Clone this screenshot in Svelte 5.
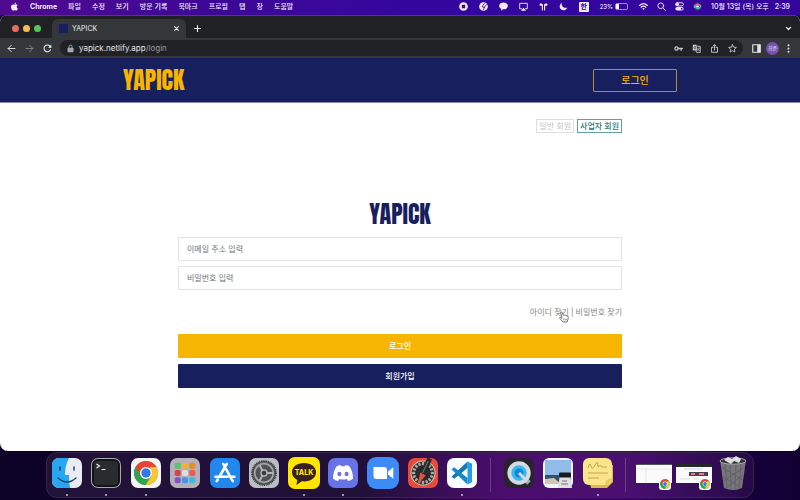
<script>
  const menus = ['파일', '수정', '보기', '방문 기록', '북마크', '프로필', '탭', '창', '도움말'];
  const status = ['record', 'clock', 'chat', 'display', 'airpods', 'moon'];
  const apps = [
    { id: 'finder', name: 'Finder', open: true },
    { id: 'terminal', name: 'Terminal', open: true },
    { id: 'chrome', name: 'Chrome', open: true },
    { id: 'launchpad', name: 'Launchpad' },
    { id: 'store', name: 'App Store' },
    { id: 'settings', name: 'Settings' },
    { id: 'talk', name: 'KakaoTalk', open: true },
    { id: 'discord', name: 'Discord', open: true },
    { id: 'zoom', name: 'Zoom' },
    { id: 'tester', name: 'Speed test' },
    { id: 'code', name: 'Code', open: true }
  ];
  const tools = [
    { id: 'quicktime', name: 'QuickTime' },
    { id: 'preview', name: 'Preview' },
    { id: 'notes', name: 'Stickies', open: true }
  ];
  const windows = [
    { id: 'window1', name: 'Window 1' },
    { id: 'window2', name: 'Window 2' },
    { id: 'trash', name: 'Trash' }
  ];
  const pads = ['#54c568', '#f3b32c', '#e88d25', '#d94343', '#dedede', '#ef5b50', '#8751c9', '#369ce8', '#43b9d8'];
  const ticks = Array.from({ length: 16 }, (_, i) => i * 22.5);
</script>

{#snippet chromeMark()}
  <circle cx="15" cy="15" r="12" fill="#31a350" />
  <path d="M4.6 9A12 12 0 0 1 25.4 9L15 9.4 9.8 18Z" fill="#e94335" />
  <path d="M25.4 9A12 12 0 0 1 14.6 27L20.2 18 19 9Z" fill="#fbc52d" />
  <path d="M4.6 9 9.8 18 15 21 14.6 27A12 12 0 0 1 4.6 9Z" fill="#31a350" />
  <circle cx="15" cy="15" r="6" fill="#fff" />
  <circle cx="15" cy="15" r="4.7" fill="#3478e5" />
{/snippet}

{#snippet glyph(id)}
  <svg class="glyph" viewBox="0 0 12 12" fill="none" stroke="currentColor" stroke-width="1.2" stroke-linecap="round" stroke-linejoin="round" aria-hidden="true">
    {#if id === 'apple'}
      <path d="M8.1.6C8 2 7.1 2.8 6 2.8 6 1.6 7 .8 8.1.6ZM10.2 4.2C8.3 5.4 8.7 7.9 10.6 8.6 10 10.2 9 11.5 8 11.4 7.1 11.3 6.8 11 6 11 5.2 11 4.8 11.4 4 11.4 2.8 11.4 1.4 8.8 1.4 6.5 1.4 3.3 4.2 2.7 6 3.7 7.4 2.8 9.2 3 10.2 4.2Z" fill="currentColor" stroke="none" />
    {:else if id === 'record'}
      <circle cx="6" cy="6" r="5.8" fill="currentColor" stroke="none" /><rect x="3.8" y="3.8" width="4.4" height="4.4" rx=".7" fill="#34069b" stroke="none" />
    {:else if id === 'clock'}
      <circle cx="6" cy="6" r="5.8" fill="currentColor" stroke="none" /><path d="M7.2 2 4 6.2 7 7.2M7 7.2 9.8 3.6M7 7.2 6.2 10" stroke="#34069b" stroke-width="1.1" />
    {:else if id === 'chat'}
      <path d="M6 .7C2.8.7.2 2.7.2 5.2.2 6.8 1.3 8.2 3 9L2.6 11.6 5.4 9.7C9 9.9 11.8 7.9 11.8 5.2 11.8 2.7 9.2.7 6 .7Z" fill="currentColor" stroke="none" />
    {:else if id === 'display'}
      <path d="M3.5 9H.9V1.8H11.1V9H8.5" /><path d="M3.8 10.8 6 8.4 8.2 10.8Z" fill="currentColor" />
    {:else if id === 'airpods'}
      <path d="M4.5 10.7V3.8M7.5 10.7V3.8" stroke-width="1.5" /><path d="M5 4.4C4.8 1.2.6 1.2.6 3.8.6 5.5 3.2 5.4 5 4.4ZM7 4.4C7.2 1.2 11.4 1.2 11.4 3.8 11.4 5.5 8.8 5.4 7 4.4Z" fill="currentColor" stroke="none" />
    {:else if id === 'moon'}
      <path d="M3.8.9C2.5 4.9 6.3 8.9 11 7.5 9.6 10.6 5.8 12 3 10 .1 7.9.2 3.2 3.8.9Z" fill="currentColor" stroke="none" />
    {:else if id === 'wifi'}
      <path d="M.8 4.6Q6-.2 11.2 4.6M2.8 6.9Q6 4.1 9.2 6.9" stroke-width="1.6" /><path d="M4.3 8.7Q6 7.3 7.7 8.7L6 10.6Z" fill="currentColor" stroke="none" />
    {:else if id === 'search'}
      <circle cx="5" cy="5" r="3.8" /><path d="m8 8 3.2 3.2" />
    {:else if id === 'control'}
      <rect x=".8" y="1" width="10.4" height="4.2" rx="2.1" /><circle cx="3.2" cy="3.1" r="1.6" fill="currentColor" /><rect x=".5" y="6.6" width="11" height="4.8" rx="2.4" fill="currentColor" stroke="none" /><circle cx="9" cy="9" r="1.2" fill="#34069b" stroke="none" />
    {:else if id === 'siri'}
      <circle cx="6" cy="6" r="5.6" fill="#34345f" stroke="none" /><path d="M2 7C4 2 7 2 10 5" stroke="#d867a8" stroke-width="2" /><path d="M2 5C4 10 8 10 10 6" stroke="#42b6cf" stroke-width="2" /><circle cx="6" cy="6" r="1.8" fill="#e5edff" stroke="none" />
    {:else if id === 'back'}
      <path d="M10.7 6H1.5M5.8 1.7 1.5 6 5.8 10.3" />
    {:else if id === 'forward'}
      <path d="M1.3 6h9.2M6.2 1.7 10.5 6 6.2 10.3" />
    {:else if id === 'reload'}
      <path d="M10 7.8A4.5 4.5 0 1 1 9.3 2.9L10.5 4.3" stroke-width="1.5" /><path d="M11 .8V5H6.8Z" fill="currentColor" stroke="none" />
    {:else if id === 'lock'}
      <rect x="2" y="5" width="8" height="6" rx="1" fill="currentColor" stroke="none" /><path d="M4 5V3.3A2 2 0 0 1 8 3.3V5" />
    {:else if id === 'key'}
      <circle cx="3.3" cy="6" r="2.2" stroke-width="1.6" /><path d="M5.8 6h5.2M9.5 6v2.2" stroke-width="1.8" />
    {:else if id === 'translate'}
      <path d="M1 1h5l1.5 7.5H1Z" fill="currentColor" stroke="none" /><path d="M7.5 3H11V11.2H6L5.3 9" /><path d="M5.3 3.8A1.6 1.6 0 1 0 5.3 5.8V4.9H4.2" stroke="#35363a" stroke-width=".8" /><path d="M8 5.3h2.2M9.8 5.5 7.9 9M8.2 6.5l1.8 2.5" stroke-width=".7" />
    {:else if id === 'share'}
      <path d="M4 4.5H2V11H10V4.5H8M6 8V1M4 2.8 6 .9 8 2.8" />
    {:else if id === 'star'}
      <path d="m6 .9 1.5 3.3 3.7.4-2.7 2.5.7 3.6L6 8.9l-3.2 1.8.7-3.6L.8 4.6l3.7-.4Z" />
    {:else if id === 'panel'}
      <rect x="1" y="1" width="10" height="10" stroke-width="1.5" /><path d="M7 1h4v10H7Z" fill="currentColor" stroke="none" />
    {:else if id === 'more'}
      <circle cx="6" cy="1.7" r="1.3" fill="currentColor" stroke="none" /><circle cx="6" cy="6" r="1.3" fill="currentColor" stroke="none" /><circle cx="6" cy="10.3" r="1.3" fill="currentColor" stroke="none" />
    {:else if id === 'close'}
      <path d="m3.5 3.5 5 5M8.5 3.5l-5 5" stroke-width="1.4" />
    {:else if id === 'plus'}
      <path d="M6 2v8M2 6h8" stroke-width="1.5" />
    {:else if id === 'down'}
      <path d="m3.2 4.5 2.8 2.8 2.8-2.8" stroke-width="1.8" />
    {/if}
  </svg>
{/snippet}

{#snippet appIcon(id)}
  <svg class="app-icon" viewBox="0 0 30 30" aria-hidden="true">
    {#if id === 'finder'}
      <rect width="30" height="30" rx="7" fill="#e9edf3" />
      <path d="M7 0H17C14 6 13 11 13 17H17C17 22 17.3 26 18.2 30H7A7 7 0 0 1 0 23V7A7 7 0 0 1 7 0Z" fill="#29a6f2" />
      <path d="M6 20Q15 28 24 20" fill="none" stroke="#204462" stroke-width="1.3" stroke-linecap="round" /><path d="M8 9v3M22 9v3" stroke="#204462" stroke-width="1.5" stroke-linecap="round" />
    {:else if id === 'terminal'}
      <rect width="30" height="30" rx="7" fill="#a6a9aa" /><rect x="1" y="1" width="28" height="28" rx="6" fill="#111315" /><rect x="3" y="3" width="24" height="24" rx="4" fill="#292c2e" /><path d="m5.5 6 3 2-3 2M10.5 11.5H14.5" fill="none" stroke="#eee" stroke-width="1.2" />
    {:else if id === 'chrome'}
      <rect width="30" height="30" rx="7" fill="#f5f5f5" />{@render chromeMark()}
    {:else if id === 'launchpad'}
      <rect width="30" height="30" rx="7" fill="#b3afbb" />
      {#each pads as color, i}<rect x={4.7 + (i % 3) * 7.3} y={4.7 + Math.floor(i / 3) * 7.3} width="6" height="6" rx="1.7" fill={color} />{/each}
    {:else if id === 'store'}
      <rect width="30" height="30" rx="7" fill="#2187ed" /><g fill="none" stroke="#fff" stroke-width="2.6" stroke-linecap="round"><path d="m13.3 6 8.3 15.2M16.7 6 9.3 19M5.5 18.8h12.2M21 18.8h3.4M7.7 21.5l-1 1.7M21.8 21.5l1 1.7" /></g>
    {:else if id === 'settings'}
      <rect width="30" height="30" rx="7" fill="#b9bec5" /><circle cx="15" cy="15" r="12" fill="#55565a" /><circle cx="15" cy="15" r="12.2" fill="none" stroke="#36383b" stroke-width="1.5" stroke-dasharray="1 .8" /><circle cx="15" cy="15" r="9.3" fill="#505256" stroke="#a6a7a9" stroke-width="1.7" /><path d="M15 15H24M15 15 10.5 7.2M15 15 10.5 22.8" stroke="#b1b2b4" stroke-width="2" /><circle cx="15" cy="15" r="3" fill="#37393c" stroke="#b6b7b9" stroke-width="1.3" />
    {:else if id === 'talk'}
      <rect x="-1" y="-1" width="32" height="32" rx="7" fill="#ffe500" /><path d="M15 5C8 5 3 8.9 3 14.3 3 17.7 5.1 20.4 8.3 22L7.4 27 12.8 23.3C21 24.2 27 20.1 27 14.3 27 8.9 22 5 15 5Z" fill="#392022" /><text x="15" y="17.2" text-anchor="middle" class="talk">TALK</text>
    {:else if id === 'discord'}
      <rect width="30" height="30" rx="7" fill="#6873e8" /><path d="M8.4 8.4Q10 7.2 12.5 6.9L13.3 8.3Q15 8 16.7 8.3L17.5 6.9Q20 7.2 21.6 8.4 25.3 14.2 25 20.5 22.8 22.5 20 23L18.8 21Q15 22.1 11.2 21L10 23Q7.2 22.5 5 20.5 4.7 14.2 8.4 8.4Z" fill="#fff" /><ellipse cx="11.4" cy="16" rx="2" ry="2.3" fill="#6873e8" /><ellipse cx="18.6" cy="16" rx="2" ry="2.3" fill="#6873e8" />
    {:else if id === 'zoom'}
      <rect x="-1" y="-1" width="32" height="32" rx="9" fill="#3e8bf7" /><path d="M5.5 9H16A3 3 0 0 1 19 12V21H8.5A3 3 0 0 1 5.5 18ZM20 13.4 25.3 9.3V20.7L20 16.6Z" fill="#fff" />
    {:else if id === 'tester'}
      <rect width="30" height="30" rx="7" fill="#e84b38" /><circle cx="15" cy="15" r="12.5" fill="#d7d3cd" /><circle cx="15" cy="15" r="11.5" fill="#282a2b" />
      {#each ticks as angle}<path d="M15 4v3.2" stroke="#aaa49c" stroke-width="2.4" transform="rotate({angle} 15 15)" />{/each}
      <path d="m12.2 14.2 5.6 3.1-8 9.5Z" fill="#e6503e" /><path d="m12.2 14.2 7.5-15 4.2 2.3-6.2 15.8Z" fill="#292b2d" /><path d="m14.5 15 5.8-12" stroke="#747779" stroke-width="1" />
    {:else if id === 'code'}
      <rect width="30" height="30" rx="7" fill="#f9fcff" /><path d="M20.5 3.5 25 5.7V24.3L20.5 26.5Z" fill="#269fe1" /><path d="M20.5 3.5V10L7.3 20.8 4.5 18.8Z" fill="#1677b6" /><path d="M20.5 26.5V20L7.3 9.2 4.5 11.2Z" fill="#1688cd" />
    {:else if id === 'quicktime'}
      <rect width="30" height="30" rx="7" fill="#28242e" /><path d="m17 17 8 8" stroke="#a5a8ae" stroke-width="5" /><circle cx="15" cy="15" r="9.7" fill="#36b8ef" stroke="#d7dbe0" stroke-width="4" /><circle cx="15" cy="15" r="4.5" fill="#1386d9" /><path d="m15 15 6.5 6.5" stroke="#d7dbe0" stroke-width="3" />
    {:else if id === 'preview'}
      <rect width="30" height="30" rx="6" fill="#f2f3f5" /><path d="M2 2h26v16H2Z" fill="#91bce9" /><path d="M2 17h26v9H2Z" fill="#34506a" /><path d="m2 21 9-1 7 6H2Z" fill="#d4c7b1" /><path d="M17 16h10l2 14H15Z" fill="#dedfdf" /><rect x="16" y="14.5" width="12" height="5" rx="1" fill="#191b1e" /><path d="M18 26h7M19 23h5" stroke="#777" />
    {:else if id === 'notes'}
      <path d="M3 7h27v17l-6 6H8Z" fill="#d8b950" /><rect width="29" height="27" rx="6" fill="#fae58d" /><path d="M22 27Q22 21 29 20Q28 26 22 27Z" fill="#e8c95f" /><path d="M5 10q2-7 3-2t4-1 3 2q2-3 4 0h5M5 15h20M5 20h11" fill="none" stroke="#c7a44c" stroke-width="1" />
    {:else if id === 'trash'}
      <path d="M2 2h26l-4 28Q15 34 6 30Z" fill="#77767b" /><path d="m7 5 2 25M12 5l1 26M18 5l-1 26M23 5l-2 25M3 9l22 13M27 9 5 23M4 18l18 11M25 17 8 30" stroke="#626167" stroke-width="1" /><ellipse cx="15" cy="3" rx="13" ry="3.2" fill="#343239" stroke="#aaa8ad" /><path d="m6 2 4-3 4 2 4-3 5 3-2 4-5-2-3 3Z" fill="#dedfe1" />
    {/if}
  </svg>
{/snippet}

{#snippet windowIcon(id)}
  <svg class="window-icon" viewBox="0 0 36 30" aria-hidden="true">
    <rect y="6" width="36" height="19" fill="#fafafa" />
    {#if id === 'window1'}
      <path d="M0 6h36v1H0Z" fill="#55565a" /><path d="M10 9v15M1 11h34" stroke="#ddd" stroke-width=".6" />
    {:else}
      <path d="M0 6h36v3H0Z" fill="#26272a" /><path d="M8 11h19" stroke="#c5d8da" /><rect x="13" y="14" width="19" height="4" fill="#454059" /><path d="M15 16h4M23 16h5" stroke="#f17b6a" stroke-width="2" /><path d="M4 21h10M17 21h6" stroke="#ddd" />
    {/if}
    <rect x="23" y="20" width="12" height="12" rx="3" fill="#f7f7f7" />
    <g transform="translate(23 20) scale(.4)">{@render chromeMark()}</g>
  </svg>
{/snippet}

<div class="desktop">
  <nav class="menubar" aria-label="시스템 메뉴">
    <div class="menus">
      {@render glyph('apple')}<strong>Chrome</strong>
      {#each menus as item}<span>{item}</span>{/each}
    </div>
    <div class="status">
      {#each status as item}{@render glyph(item)}{/each}
      <b class="lang">한</b>
      <span class="power">23% <i></i></span>
      {@render glyph('wifi')}{@render glyph('search')}{@render glyph('control')}{@render glyph('siri')}
    </div>
    <time><span>10월 13일 (목) 오후</span><span>2:39</span></time>
  </nav>

  <section class="browser">
    <div class="tabs">
      <div class="lights"><i class="red"></i><i class="amber"></i><i class="green"></i></div>
      <div class="tab"><i class="favicon"></i><span>YAPICK</span><button aria-label="탭 닫기">{@render glyph('close')}</button></div>
      <button class="new" aria-label="새 탭">{@render glyph('plus')}</button>
      <button class="down" aria-label="탭 검색">{@render glyph('down')}</button>
    </div>
    <div class="toolbar">
      <div class="history">
        <button aria-label="뒤로">{@render glyph('back')}</button>
        <button class="faded" aria-label="앞으로">{@render glyph('forward')}</button>
        <button aria-label="새로고침">{@render glyph('reload')}</button>
      </div>
      <div class="address">
        <span class="lock">{@render glyph('lock')}</span>
        <span class="url">yapick.netlify.app<em>/login</em></span>
        <button aria-label="비밀번호">{@render glyph('key')}</button>
        <button aria-label="번역">{@render glyph('translate')}</button>
        <button aria-label="공유">{@render glyph('share')}</button>
        <button aria-label="북마크 추가">{@render glyph('star')}</button>
      </div>
      <div class="tools">
        <button aria-label="측면 패널">{@render glyph('panel')}</button>
        <button class="avatar">희준</button>
        <button aria-label="더보기">{@render glyph('more')}</button>
      </div>
    </div>

    <header>
      <div class="header-inner">
        <a class="brand" href="#home">YAPICK</a>
        <button class="header-login">로그인</button>
      </div>
    </header>

    <main>
      <div class="kinds">
        <button>일반 회원</button>
        <button class="chosen">사업자 회원</button>
      </div>
      <h1 class="brand">YAPICK</h1>
      <form onsubmit={(e) => e.preventDefault()}>
        <input type="email" placeholder="이메일 주소 입력" aria-label="이메일 주소 입력" />
        <input type="password" placeholder="비밀번호 입력" aria-label="비밀번호 입력" />
        <div class="help">
          <a href="#id">아이디 찾기<svg class="pointer" viewBox="0 0 12 14" aria-hidden="true"><path d="M3.4 7.5 2 2.1C1.7.8 3.3.5 3.8 1.6L5.2 5.2C5.8 4.3 6.8 4.5 7.2 5.3 7.9 4.6 8.8 4.9 9.1 5.7 10.2 5.2 11 6 11 7.2V9.3L9.6 13H4.7L1 8.7C.4 7.7 1.3 6.9 2.2 7.5L3.4 8.8Z" fill="#fff" stroke="#555" /><path d="M5.5 9v2M7.2 9v2M8.9 9v2" stroke="#555" stroke-width=".7" /></svg></a>
          <span>|</span>
          <a href="#password">비밀번호 찾기</a>
        </div>
        <button class="submit">로그인</button>
        <button class="join" type="button">회원가입</button>
      </form>
    </main>
  </section>

  <div class="dock-area">
    <nav class="dock" aria-label="Dock">
      {#each apps as app}<button class:open={app.open} aria-label={app.name}>{@render appIcon(app.id)}</button>{/each}
      <i class="divider"></i>
      {#each tools as app}<button class:open={app.open} aria-label={app.name}>{@render appIcon(app.id)}</button>{/each}
      <i class="divider"></i>
      {#each windows as app}
        <button aria-label={app.name}>
          {#if app.id === 'trash'}{@render appIcon(app.id)}{:else}{@render windowIcon(app.id)}{/if}
        </button>
      {/each}
    </nav>
  </div>
</div>

<style>
  :global(body) { margin: 0; }
  .desktop, .desktop * { box-sizing: border-box; }
  .desktop {
    min-height: 100vh;
    display: flex;
    flex-direction: column;
    font-family: Inter, "Noto Sans CJK KR", sans-serif;
    font-size: 8px;
    background: linear-gradient(90deg, #0c0326, #17052f 45%, #48086b 64%, #3b0768 78%, #16013c 93%, #120032);
  }
  button { appearance: none; border: 0; background: none; padding: 0; margin: 0; color: inherit; font: inherit; }
  a { color: inherit; text-decoration: none; }
  svg { display: block; overflow: visible; flex-shrink: 0; }
  .glyph { width: 9px; height: 9px; }

  .menubar {
    height: 15px;
    padding: 0 10px 2px;
    display: flex;
    align-items: center;
    background: linear-gradient(90deg, #500a91, #3e0896 25%, #3206a0 60%, #35069a);
    color: #f1eafa;
    font-size: 7px;
    font-weight: 500;
    line-height: 13px;
    white-space: nowrap;
  }
  .menus { display: flex; align-items: center; gap: 11px; }
  .status { display: flex; align-items: center; gap: 11px; margin-left: auto; }
  .status .glyph:nth-last-child(-n + 3) { margin-left: -2px; }
  .lang { width: 10px; height: 10px; background: #f1eafa; color: #34069b; border-radius: 1px; line-height: 10px; text-align: center; }
  .power { display: flex; align-items: center; gap: 2px; font-size: 6px; }
  .power i { width: 13px; height: 7px; border: 1px solid #9f87d1; border-radius: 2px; background: linear-gradient(90deg, #fff 25%, transparent 25%); }
  time { display: flex; gap: 6px; margin-left: 9px; }

  .browser { flex: 1; display: flex; flex-direction: column; overflow: hidden; border-radius: 7px 7px 8px 8px; background: #fff; }
  .tabs { height: 23px; padding: 3px 7px 0 12px; display: flex; align-items: center; background: #202124; border-top: 1px solid #4a4650; color: #eceef1; }
  .lights { display: flex; gap: 4px; width: 40px; }
  .lights i { width: 7px; height: 7px; border-radius: 50%; }
  .red { background: #ec6a5e; }
  .amber { background: #f4bd4f; }
  .green { background: #51c45b; }
  .tab { align-self: stretch; width: 134px; padding: 0 5px 0 7px; border-radius: 6px 6px 0 0; background: #35363a; display: flex; align-items: center; gap: 4px; font-size: 7px; }
  .tab button { margin-left: auto; }
  .favicon { width: 9px; height: 9px; background: #181f5e; }
  .new { margin-left: 7px; }
  .down { margin-left: auto; }
  .toolbar { height: 20px; padding: 0 7px; display: flex; align-items: center; background: #35363a; color: #e4e6e9; }
  .history { display: flex; gap: 9px; width: 53px; }
  .faded { color: #85878c; }
  .address { flex: 1; height: 16px; padding: 0 6px; border-radius: 8px; background: #202124; display: flex; align-items: center; gap: 9px; }
  .address button { color: #c8cbd0; }
  .lock { color: #a6a9ae; }
  .url { margin-right: auto; margin-left: -5px; }
  .url em { font-style: normal; color: #989ba0; }
  .tools { display: flex; align-items: center; gap: 5px; margin-left: 9px; }
  .avatar { width: 13px; height: 13px; border-radius: 50%; background: #7851b5; font-size: 5px; line-height: 13px; white-space: nowrap; }

  header { height: 45px; padding: 0 24px; background: #181f5e; border-bottom: 1px solid #8589ab; display: flex; justify-content: center; align-items: center; }
  .header-inner { width: 100%; max-width: 554px; display: flex; align-items: center; justify-content: space-between; color: #f6b500; }
  .brand { margin: 0; font-family: Anton, Impact, "Noto Sans ExtraCondensed Black", "Noto Sans ExtraCondensed", "Open Sans Condensed", "Roboto Condensed", Roboto, sans-serif; font-size: 24px; font-weight: 400; line-height: 26px; }
  .header-login { width: 84px; height: 23px; border: 1px solid #b88c28; border-radius: 1px; font-size: 10px; font-weight: 500; line-height: 20px; }

  main { flex: 1; width: 100%; max-width: 460px; margin: 0 auto; padding: 16px 8px; line-height: 12px; }
  .kinds { display: flex; justify-content: flex-end; gap: 3px; }
  .kinds button { height: 14px; padding: 0 2px; border: 1px solid #dedede; color: #c4c4c4; line-height: 12px; }
  .kinds .chosen { border-color: #60a0a2; color: #26777b; font-weight: 500; }
  h1.brand { text-align: center; margin: 68px 0 10px; color: #181f5e; }
  form { display: flex; flex-direction: column; }
  input { width: 100%; height: 24px; margin: 0 0 5px; padding: 0 8px; border: 1px solid #e2e2e4; border-radius: 1px; outline: 0; font: inherit; color: #444; background: #fff; }
  input::placeholder { color: #6d747b; opacity: 1; }
  .help { display: flex; justify-content: flex-end; gap: 2px; margin: 11px 0 16px; color: #858585; }
  .help a { position: relative; }
  .pointer { position: absolute; right: 0; top: 5px; width: 10px; height: 12px; }
  .submit, .join { height: 24px; color: #fff; font-weight: 500; border-radius: 1px; }
  .submit { background: #f6b500; margin-bottom: 6px; }
  .join { background: #181f5e; }

  .dock-area { height: 49px; padding: 1px 24px 2px; display: flex; justify-content: center; }
  .dock { width: 100%; max-width: 708px; display: flex; border: 1px solid #3b2550; border-radius: 11px; background: linear-gradient(90deg, #211238, #211039 45%, #4a0d6d 64%, #4a1070 82%, #250a46); }
  .dock button { flex: 1; padding-top: 5px; display: flex; flex-direction: column; align-items: center; }
  .app-icon { width: 30px; height: 30px; }
  .window-icon { width: 36px; height: 30px; }
  .open::after { content: ""; width: 2px; height: 2px; margin-top: 6px; border-radius: 50%; background: #c7becf; }
  .divider { width: 17px; height: 34px; margin-top: 5px; background: linear-gradient(#65427b, #65427b) center / 1px 100% no-repeat; }
  .talk { font: 800 7px Inter, sans-serif; fill: #ffe500; }
</style>
